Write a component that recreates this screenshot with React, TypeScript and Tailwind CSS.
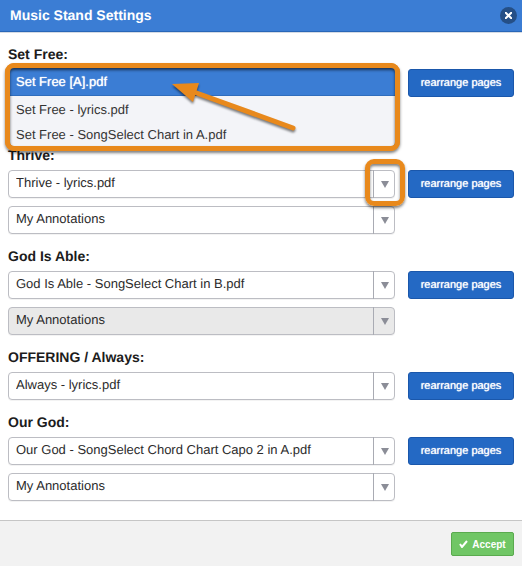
import { FC } from "react"

type Song = {
  id: string
  title: string
  file: string
  annotations?: "on" | "off"
  open?: boolean
  highlight?: boolean
}

type PickerProps = {
  name: string
  label: string
  value: string
  disabled?: boolean
}

const songs: Song[] = [
  { id: "set-free", title: "Set Free", file: "Set Free [A].pdf", annotations: "on", open: true },
  { id: "thrive", title: "Thrive", file: "Thrive - lyrics.pdf", annotations: "on", highlight: true },
  { id: "god-is-able", title: "God Is Able", file: "God Is Able - SongSelect Chart in B.pdf", annotations: "off" },
  { id: "always", title: "OFFERING / Always", file: "Always - lyrics.pdf" },
  { id: "our-god", title: "Our God", file: "Our God - SongSelect Chord Chart Capo 2 in A.pdf", annotations: "on" },
]

const menuItems = ["Set Free - lyrics.pdf", "Set Free - SongSelect Chart in A.pdf"]

const Picker: FC<PickerProps> = ({ name, label, value, disabled }) => (
  <div className="relative">
    <select
      id={name}
      name={name}
      aria-label={label}
      disabled={disabled}
      className="block h-7 w-full appearance-none rounded-[4px] border border-[#bcbdc3] bg-white pr-6 pb-[2px] pl-[7px] text-[13px] text-[#2b2b2b] opacity-100 shadow-[0_1px_0_#f3f3f3] [text-rendering:geometricPrecision] disabled:bg-[#e9e9e9]"
    >
      <option>{value}</option>
    </select>
    <span className="pointer-events-none absolute inset-y-0 right-0 flex w-[22px] items-center justify-center border-l border-[#a9abb3]">
      <svg width="8" height="7" viewBox="0 0 8 7" className="fill-[#8b8d97]">
        <path d="M0 0h8L4 7z" />
      </svg>
    </span>
  </div>
)

const OpenMenu = () => (
  <div className="absolute -top-[6px] -right-[5px] -left-[3px] z-10">
    <ul role="listbox" aria-label="Set Free files" className="overflow-hidden rounded-[9px] border-5 border-[#e8891c] bg-[#f3f4f8] text-[13px] text-[#333]">
      <li role="option" aria-selected="true" className="flex h-7 items-center border-b border-[#2f6dbd] bg-[#3b7dd4] px-[6px] text-white [text-shadow:0_0_1px_white]">
        Set Free [A].pdf
      </li>
      {menuItems.map((item) => (
        <li key={item} role="option" aria-selected="false" className="flex h-[25px] items-center px-[6px] pt-[2px]">
          {item}
        </li>
      ))}
    </ul>
    <div className="pointer-events-none absolute inset-0 rounded-[9px] border-5 border-[#e8891c] shadow-[0_2px_3px_rgba(0,0,0,0.5)]">
      <div className="h-full rounded-[4px] shadow-[inset_0_2px_3px_rgba(0,0,0,0.6)]" />
    </div>
    <svg width="136" height="60" viewBox="0 0 136 60" className="pointer-events-none absolute top-[16px] left-[162px] drop-shadow-[0_2px_1px_rgba(0,0,0,0.5)]">
      <path d="M24 12L126 49" stroke="#e8891c" strokeWidth="5" strokeLinecap="round" />
      <path d="M5 5L32 4L26 23z" fill="#e8891c" />
    </svg>
  </div>
)

const SongRow: FC<{ song: Song }> = ({ song }) => (
  <section>
    <label htmlFor={song.id} className="block h-5 text-[14px] leading-[10px] font-bold text-[#1c1c1c]">
      {song.title}:
    </label>
    <div className="grid grid-cols-[1fr_106px] gap-x-[13px] gap-y-2">
      <div className="relative">
        <Picker name={song.id} label={song.title} value={song.file} />
        {song.open && <OpenMenu />}
        {song.highlight && (
          <div className="pointer-events-none absolute -top-[11px] -right-[10px] z-10 h-[47px] w-10 rounded-[9px] border-5 border-[#e8891c] shadow-[0_2px_3px_rgba(0,0,0,0.5)]">
            <div className="h-full rounded-[4px] shadow-[inset_0_2px_3px_rgba(0,0,0,0.5)]" />
          </div>
        )}
      </div>
      <button type="button" className="h-7 rounded-[3px] border border-[#1a57ab] bg-[#2469c4] text-[11px] text-white [text-rendering:geometricPrecision] [text-shadow:0_0_1px_white]">
        rearrange pages
      </button>
      {song.annotations && (
        <Picker
          name={`${song.id}-notes`}
          label={`${song.title} annotations`}
          value="My Annotations"
          disabled={song.annotations === "off"}
        />
      )}
    </div>
  </section>
)

const App = () => {
  return (
    <div className="flex min-h-screen flex-col bg-white font-['Liberation_Sans',Arial,sans-serif] [text-rendering:geometricPrecision]">
      <header className="flex h-8 items-center justify-between border-b border-[#2867b8] bg-[#3b7dd4] pr-[5px] pl-[10px] shadow-[0_1px_0_#d5dbe4]">
        <h1 className="text-[14px] font-bold text-white">Music Stand Settings</h1>
        <button type="button" aria-label="Close" className="flex size-[17px] items-center justify-center rounded-full bg-[#254f86]">
          <svg width="7" height="7" viewBox="0 0 7 7" stroke="white" strokeWidth="2">
            <path d="M0 0L7 7M7 0L0 7" />
          </svg>
        </button>
      </header>
      <main className="flex flex-col gap-[17px] px-2 pt-[17px] pb-[19px]">
        {songs.map((song) => (
          <SongRow key={song.id} song={song} />
        ))}
      </main>
      <footer className="flex flex-1 items-start justify-end border-t border-[#c6c6c6] bg-[#f2f2f2] px-2 pt-[11px] pb-[10px]">
        <button type="button" className="flex h-6 w-[63px] items-center justify-center gap-1 rounded-[2px] border border-[#5aaa4e] bg-[#70c665] text-[10px] font-bold text-white">
          <svg width="9" height="8" viewBox="0 0 9 8" fill="none" stroke="white" strokeWidth="2">
            <path d="M1 4L3 7L8 1" />
          </svg>
          Accept
        </button>
      </footer>
    </div>
  )
}

export default App
